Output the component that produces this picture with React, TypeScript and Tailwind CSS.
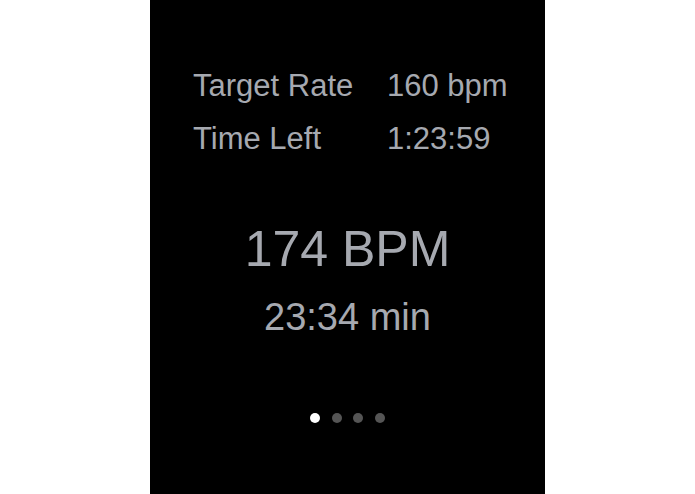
export default function App() {
  const font = { fontFamily: '"Liberation Sans", Arial, sans-serif' };
  return (
    <div className="w-[695px] h-[494px] bg-white flex" style={font}>
      <div className="ml-[150px] w-[395px] h-[494px] bg-black flex flex-col text-[#a6a9b0]">
        <div className="mt-[59px] pl-[43px] grid grid-cols-[194px_1fr] text-[31px] leading-[53px]">
          <div>Target Rate</div>
          <div>160 bpm</div>
          <div>Time Left</div>
          <div>1:23:59</div>
        </div>
        <div className="mt-[54px] text-center text-[50px] leading-[60px]">174 BPM</div>
        <div className="mt-[16px] text-center text-[38px] leading-[45px]">23:34 min</div>
        <div className="mt-[73px] flex justify-center gap-[11.5px]">
          <span className="w-[10px] h-[10px] rounded-full bg-white" />
          <span className="w-[10px] h-[10px] rounded-full bg-[#555555]" />
          <span className="w-[10px] h-[10px] rounded-full bg-[#555555]" />
          <span className="w-[10px] h-[10px] rounded-full bg-[#555555]" />
        </div>
      </div>
    </div>
  );
}
